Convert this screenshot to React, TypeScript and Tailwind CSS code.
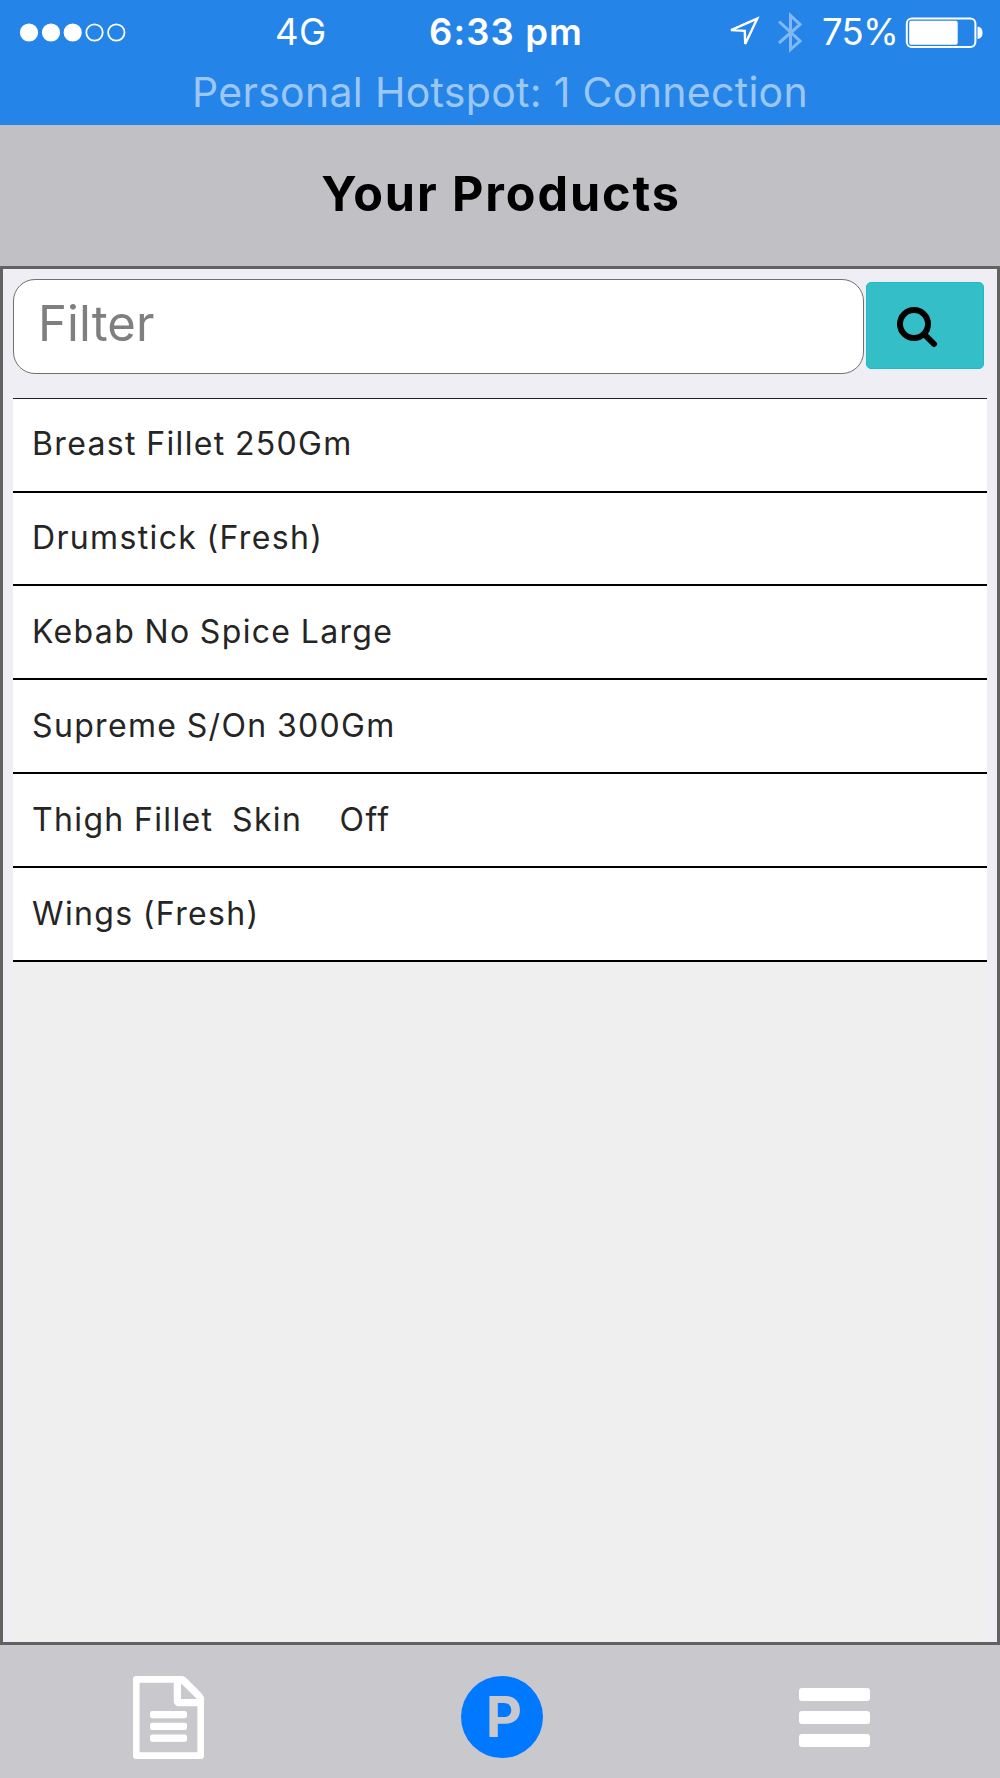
const products = [
  "Breast Fillet 250Gm",
  "Drumstick (Fresh)",
  "Kebab No Spice Large",
  "Supreme S/On 300Gm",
  "Thigh Fillet  Skin    Off",
  "Wings (Fresh)",
];

function SignalDots() {
  return (
    <svg width="110" height="20" viewBox="0 0 110 20" fill="none" stroke="#fff" strokeWidth="1.8">
      <circle cx="10" cy="9.500" r="8.200" fill="#fff" />
      <circle cx="32" cy="9.500" r="8.200" fill="#fff" />
      <circle cx="53.7" cy="9.500" r="8.200" fill="#fff" />
      <circle cx="75.5" cy="9.500" r="8.200" />
      <circle cx="97.3" cy="9.500" r="8.200" />
    </svg>
  );
}

function LocationArrow() {
  return (
    <svg width="34" height="34" viewBox="0 0 34 34" fill="none" stroke="#fff" strokeWidth="2.4">
      <path d="M30.200 2.700 4 14.100 17.800 14.900 18.200 28Z" />
    </svg>
  );
}

function Bluetooth() {
  return (
    <svg width="26" height="44" viewBox="0 0 26 44" fill="none" stroke="#81b8f2" strokeWidth="3">
      <path d="M3 10.500 24 30 14.500 38.500V4.500L24 13.500 3 32" />
    </svg>
  );
}

function Battery() {
  return (
    <svg width="78" height="32" viewBox="0 0 78 32" fill="none">
      <rect x="1.800" y="1.500" width="68.600" height="28.600" rx="5" stroke="#fff" strokeWidth="2" />
      <rect x="4.200" y="3.800" width="48.500" height="24" rx="2" fill="#fff" />
      <path d="M72.500 9.800c3.500 0 5 2.500 5 6s-1.500 6-5 6Z" fill="#fff" />
    </svg>
  );
}

function StatusBar() {
  return (
    <header className="h-[125px] bg-[#2484e8] text-white">
      <div className="grid h-[65px] grid-cols-[256px_153px_299px_49px_46px_83px_1fr] items-center pl-[19px] text-[36.5px] leading-none">
        <SignalDots />
        <span className="tracking-[0.3px]">4G</span>
        <span className="pl-px font-semibold tracking-[1.1px] whitespace-nowrap">6:33 pm</span>
        <LocationArrow />
        <Bluetooth />
        <span className="tracking-[-0.7px]">75%</span>
        <Battery />
      </div>
      <p className="text-center text-[41px] leading-[54px] tracking-[0.3px] text-[#9cc7f5]">
        Personal Hotspot: 1 Connection
      </p>
    </header>
  );
}

function SearchIcon() {
  return (
    <svg width="42" height="42" viewBox="0 0 42 42" fill="none" stroke="#000">
      <circle cx="18" cy="18" r="14" strokeWidth="6" />
      <path d="M28.500 28.500 38 38" strokeWidth="6" strokeLinecap="round" />
    </svg>
  );
}

function FileIcon() {
  return (
    <svg width="71" height="83" viewBox="0 0 1536 1792" fill="#fff" stroke="#fff" strokeWidth="30">
      <path d="M1468 380q28 28 48 76t20 88v1152q0 40-28 68t-68 28H96q-40 0-68-28t-28-68V96q0-40 28-68T96 0h896q40 0 88 20t76 48zm-444-244v376h376q-10-29-22-41l-313-313q-12-12-41-22zm384 1528V640H992q-40 0-68-28t-28-68V128H128v1536h1280zM384 800q0-14 9-23t23-9h704q14 0 23 9t9 23v64q0 14-9 23t-23 9H416q-14 0-23-9t-9-23v-64zm736 224q14 0 23 9t9 23v64q0 14-9 23t-23 9H416q-14 0-23-9t-9-23v-64q0-14 9-23t23-9h704zm0 256q14 0 23 9t9 23v64q0 14-9 23t-23 9H416q-14 0-23-9t-9-23v-64q0-14 9-23t23-9h704z" />
    </svg>
  );
}

export default function App() {
  return (
    <div className="flex h-[1778px] w-[1000px] flex-col overflow-hidden bg-[#c1c0c5] font-['Inter',sans-serif]">
      <StatusBar />
      <div className="h-[141px] pt-[28px]">
        <h1 className="pl-[2px] text-center text-[48.500px] leading-[81px] font-bold tracking-[1.900px] text-black">
          Your Products
        </h1>
      </div>

      <main className="flex h-[1379px] flex-col border-[3px] border-[#626262] bg-[#efeef4] px-[10px]">
        <div className="flex h-[129px] pt-[10px]">
          <input
            type="text"
            placeholder="Filter"
            className="h-[95px] w-[851px] rounded-[22px] border border-[#707070] bg-white pb-[6px] pl-[24px] text-[49px] tracking-[0.1px] text-black outline-none placeholder:text-[#7f7f7f] placeholder:opacity-100"
          />
          <button
            aria-label="Search"
            className="mt-[3px] ml-[2px] flex h-[87px] w-[118px] items-center rounded-[5px] border border-[#1dbbc4] bg-[#34bfc8] pt-[2px] pl-[29px]"
          >
            <SearchIcon />
          </button>
        </div>
        <ul className="border-t border-[#222228] bg-white">
          {products.map((name) => (
            <li
              key={name}
              className="flex h-[93.900px] items-center border-b-2 border-black pb-px pl-[19px] text-[32px] leading-none tracking-[1.350px] [word-spacing:-1px] whitespace-pre text-[#252525] first:h-[93.500px] first:pb-[2px]"
            >
              {name}
            </li>
          ))}
        </ul>
        <div className="flex-1 bg-[#efefef]" />
      </main>

      <nav className="flex h-[133px] items-start bg-[#c9c8cd] pt-[31px] pl-[133px]">
        <button aria-label="Documents">
          <FileIcon />
        </button>
        <button
          aria-label="Products"
          className="ml-[257px] flex size-[82px] items-center justify-center rounded-full bg-[#0078ff] pl-[4px] text-[56px] leading-none font-bold text-[#c9c8cd]"
        >
          P
        </button>
        <button aria-label="Menu" className="mt-[12px] ml-[256px] flex w-[71px] flex-col gap-[10px]">
          <span className="h-[13px] rounded-[3px] bg-white" />
          <span className="h-[13px] rounded-[3px] bg-white" />
          <span className="h-[13px] rounded-[3px] bg-white" />
        </button>
      </nav>
    </div>
  );
}
